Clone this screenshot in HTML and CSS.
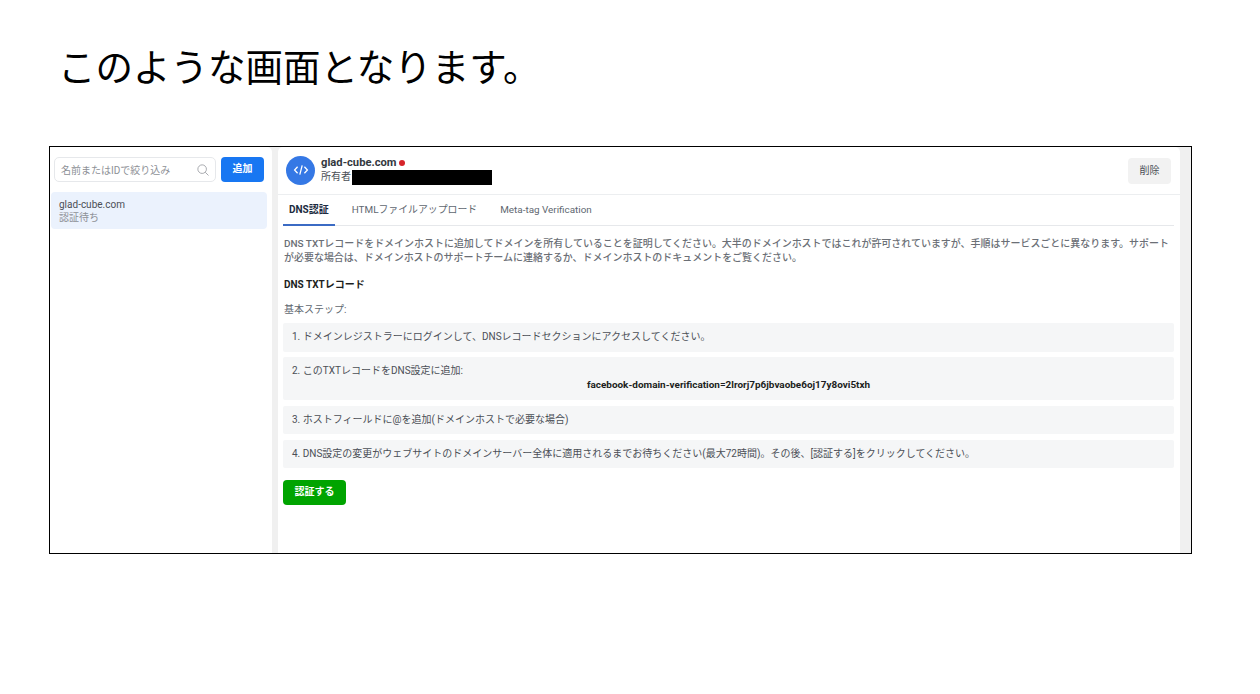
FILE: index.html
```html
<!DOCTYPE html>
<html lang="ja">
<head>
	<title>ドメイン認証</title>
	<meta charset="utf-8">
	<link rel="stylesheet" href="styles.css">
</head>
<body>
	<h1 class="slide-title">このような画面となります。</h1>

	<div class="shot">
		<div class="side">
			<div class="side-top">
				<div class="search">
					<span class="search-text">名前またはIDで絞り込み</span>
					<svg class="search-icon" viewBox="0 0 14 14" width="12" height="12">
						<circle cx="6" cy="6" r="5" fill="none" stroke="#9a9da3" stroke-width="1"/>
						<path d="M9.6 9.6L13.4 13.4" fill="none" stroke="#9a9da3" stroke-width="1"/>
					</svg>
				</div>
				<div class="add-btn">追加</div>
			</div>
			<div class="side-item">
				<div class="side-name">glad-cube.com</div>
				<div class="side-status">認証待ち</div>
			</div>
		</div>

		<div class="main">
			<div class="head">
				<div class="avatar">
					<svg viewBox="0 0 16 16" width="16" height="16">
						<path d="M4.6 4.8L1.6 8l3 3.2M11.4 4.8l3 3.2-3 3.2M9.2 3.4L6.8 12.6" fill="none" stroke="#fff" stroke-width="1.3"/>
					</svg>
				</div>
				<div class="head-text">
					<div class="head-name">glad-cube.com <span class="red-dot"></span></div>
					<div class="head-owner">所有者<span class="mask"></span></div>
				</div>
				<div class="del-btn">削除</div>
			</div>

			<div class="tabs">
				<div class="tab active">DNS認証</div>
				<div class="tab">HTMLファイルアップロード</div>
				<div class="tab">Meta-tag Verification</div>
			</div>

			<div class="body">
				<p class="intro">DNS TXTレコードをドメインホストに追加してドメインを所有していることを証明してください。大半のドメインホストではこれが許可されていますが、手順はサービスごとに異なります。サポートが必要な場合は、ドメインホストのサポートチームに連絡するか、ドメインホストのドキュメントをご覧ください。</p>
				<div class="sub-title">DNS TXTレコード</div>
				<div class="steps-label">基本ステップ:</div>
				<div class="step">1. ドメインレジストラーにログインして、DNSレコードセクションにアクセスしてください。</div>
				<div class="step">2. このTXTレコードをDNS設定に追加:
					<div class="code">facebook-domain-verification=2lrorj7p6jbvaobe6oj17y8ovi5txh</div>
				</div>
				<div class="step">3. ホストフィールドに@を追加(ドメインホストで必要な場合)</div>
				<div class="step">4. DNS設定の変更がウェブサイトのドメインサーバー全体に適用されるまでお待ちください(最大72時間)。その後、[認証する]をクリックしてください。</div>
				<div class="ok-btn">認証する</div>
			</div>
		</div>
	</div>
</body>
</html>
```

FILE: styles.css
```css
*{
	margin: 0;
	padding: 0;
	box-sizing: border-box;
}

body{
	background: #fff;
	font-family: "Roboto", "Noto Sans CJK JP", sans-serif;
	color: #4b4f56;
	width: 1260px;
	height: 694px;
	overflow: hidden;
	padding: 40px 0 0 58px;
}

.slide-title{
	font-family: "Noto Sans CJK JP", sans-serif;
	font-size: 37.5px;
	font-weight: 400;
	line-height: 50px;
	color: #000;
	height: 106px;
}

.shot{
	width: 1143px;
	height: 408px;
	margin-left: -9px;
	border: 1px solid #000;
	background: #f0f0f0;
	display: flex;
	font-size: 10px;
}

.side{
	width: 222px;
	background: #fff;
	border-top-right-radius: 5px;
	flex-shrink: 0;
	padding: 10px 0 0 4px;
}
.side-top{
	display: flex;
	gap: 5px;
}
.search{
	width: 162px;
	height: 25px;
	border: 1px solid #e6e8eb;
	border-radius: 5px;
	display: flex;
	align-items: center;
	justify-content: space-between;
	padding: 0 6px 0 6px;
	color: #8d9096;
}
.add-btn{
	width: 43px;
	height: 25px;
	background: #1877f2;
	border-radius: 4px;
	color: #fff;
	font-weight: 700;
	text-align: center;
	line-height: 24px;
}
.side-item{
	width: 216px;
	height: 37px;
	margin: 10px 0 0 -3px;
	padding: 6px 8px;
	background: #ebf2fd;
	border-radius: 4px;
	line-height: 13px;
}
.side-name{
	font-size: 10px;
}
.side-status{
	color: #8d9096;
}

.main{
	width: 902px;
	margin-left: 6px;
	background: #fff;
	border-top-right-radius: 5px;
	border-top-left-radius: 5px;
}

.head{
	height: 48px;
	display: flex;
	align-items: center;
	padding: 0 9px 1px 8px;
	border-bottom: 1px solid #eceef0;
}
.avatar{
	width: 29px;
	height: 29px;
	border-radius: 50%;
	background: #3578e5;
	display: flex;
	align-items: center;
	justify-content: center;
}
.head-text{
	margin-left: 6px;
	flex: 1;
	line-height: 14px;
	color: #1c1e21;
}
.head-name{
	font-size: 11.2px;
	font-weight: 700;
	color: #333840;
}
.red-dot{
	display: inline-block;
	width: 6px;
	height: 6px;
	border-radius: 50%;
	background: #d6242a;
	vertical-align: 0;
}
.head-owner{
	display: flex;
	align-items: center;
	height: 15px;
	color: #4b4f56;
}
.mask{
	width: 140px;
	height: 15px;
	background: #000;
	margin-left: 1px;
}
.del-btn{
	width: 43px;
	height: 26px;
	margin-top: 2px;
	background: #f2f2f2;
	border-radius: 4px;
	text-align: center;
	line-height: 25px;
}

.tabs{
	height: 31px;
	margin: 0 6px 0 5px;
	display: flex;
	border-bottom: 1px solid #e6e8eb;
}
.tab{
	padding: 0 6px;
	margin-right: 11px;
	line-height: 30px;
	font-size: 9.9px;
	color: #606770;
}
.tab.active{
	font-size: 10px;
	color: #1c2b40;
	font-weight: 700;
	border-bottom: 2px solid #3b6bc4;
	height: 31px;
}

.body{
	padding: 11px 6px 0 6px;
	line-height: 14px;
}
.intro{
	font-size: 9.97px;
	font-weight: 500;
	color: #6b6f76;
}
.sub-title{
	margin-top: 13px;
	font-weight: 700;
	color: #1c1e21;
}
.steps-label{
	margin-top: 11px;
	color: #606770;
}
.step{
	margin: 6px 0 0 -1px;
	padding: 7px 9px;
	background: #f5f6f7;
	border-radius: 2px;
}
.steps-label + .step{
	padding-bottom: 8px;
}
.steps-label + .step + .step{
	margin-top: 5px;
}
.code{
	font-size: 9.95px;
	text-align: center;
	color: #1c1e21;
	font-weight: 700;
	padding-bottom: 1px;
}
.ok-btn{
	width: 63px;
	height: 25px;
	margin: 12px 0 0 -1px;
	background: #00a400;
	border-radius: 4px;
	color: #fff;
	font-weight: 700;
	text-align: center;
	line-height: 24px;
}
```
